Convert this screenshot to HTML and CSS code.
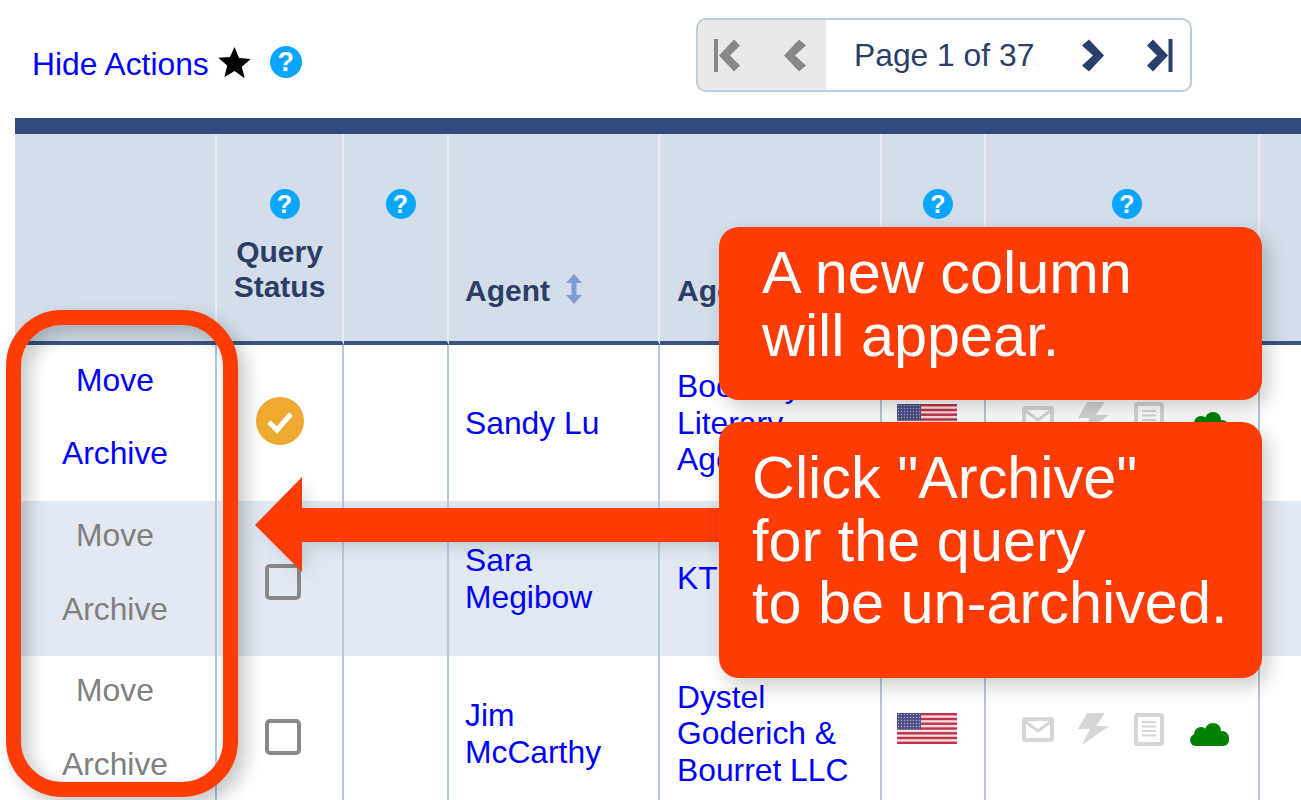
FILE: index.html
```html
<!DOCTYPE html>
<html lang="en">
<head>
<meta charset="utf-8">
<title>Query list</title>
<link rel="stylesheet" href="styles.css">
</head>
<body>
<div class="page">
  <div class="toolbar">
    <div class="hide-group">
      <a class="link" href="#">Hide Actions</a>
      <svg class="star" viewBox="0 0 32 32"><path d="M16 1l4.400 10.600 11.400.9-8.700 7.500 2.700 11.200L16 24.200 6.200 30.200l2.700-11.200L.2 11.500l11.400-.9z"/></svg>
      <span class="help help-lg">?</span>
    </div>
    <div class="pager">
      <div class="pager-off">
        <svg class="pg pg-first" viewBox="0 0 26 33"><rect x="0" y="0" width="4" height="33"/><polygon points="5,16.500 20,.5 26,6.500 16,16.500 26,26.500 20,32.500"/></svg>
        <svg class="pg pg-prev" viewBox="0 0 22 33"><polygon points="0,16.500 15,.5 22,6.500 11,16.500 22,26.500 15,32.500"/></svg>
      </div>
      <span class="pg-label">Page 1 of 37</span>
      <svg class="pg pg-next" viewBox="0 0 22 33"><polygon points="22,16.500 7,.5 0,6.500 11,16.500 0,26.500 7,32.500"/></svg>
      <svg class="pg pg-last" viewBox="0 0 26 33"><rect x="21.500" y="0" width="4" height="33"/><polygon points="21,16.500 6,.5 0,6.500 10,16.500 0,26.500 6,32.500"/></svg>
    </div>
  </div>

  <table class="grid">
    <colgroup>
      <col class="c1"><col class="c2"><col class="c3"><col class="c4"><col class="c5"><col class="c6"><col class="c7"><col class="c8">
    </colgroup>
    <thead>
      <tr>
        <th></th>
        <th class="th-stack"><span class="help">?</span><span class="th-text">Query<br>Status</span></th>
        <th class="th-stack"><span class="help">?</span></th>
        <th class="th-left th-agent"><span class="th-text">Agent</span>
          <svg class="sort" viewBox="0 0 16 30"><path d="M8 0l8 9h-5.500v12H16l-8 9-8-9h5.500V9H0z"/></svg></th>
        <th class="th-left"><span class="th-text">Agency</span></th>
        <th class="th-stack"><span class="help">?</span></th>
        <th class="th-stack"><span class="help">?</span></th>
        <th></th>
      </tr>
    </thead>
    <tbody>
      <tr class="row-a">
        <td class="actions"><a class="link" href="#">Move</a><a class="link" href="#">Archive</a></td>
        <td class="status"><svg class="check" viewBox="0 0 48 48"><circle cx="24" cy="24" r="24"/><path d="M13 25l8 8 14-16"/></svg></td>
        <td></td>
        <td class="name name-agent"><a class="link" href="#">Sandy Lu</a></td>
        <td class="name"><a class="link" href="#">Bookiary Literary Agency</a></td>
        <td class="flagcell"><svg class="flag" viewBox="0 0 60 31"><use href="#us"/></svg></td>
        <td class="iconcell"><div class="icons"><svg class="i-mail" viewBox="0 0 32 25"><use href="#mail"/></svg><svg class="i-bolt" viewBox="0 0 32 32"><use href="#bolt"/></svg><svg class="i-doc" viewBox="0 0 30 33"><use href="#doc"/></svg><svg class="i-cloud" viewBox="0 0 39 23"><use href="#cloud"/></svg></div></td>
        <td></td>
      </tr>
      <tr class="row-b">
        <td class="actions muted"><a href="#">Move</a><a href="#">Archive</a></td>
        <td class="status"><span class="box"></span></td>
        <td></td>
        <td class="name name-agent"><a class="link" href="#">Sara<br>Megibow</a></td>
        <td class="name"><a class="link" href="#">KT Literary</a></td>
        <td class="flagcell"><svg class="flag" viewBox="0 0 60 31"><use href="#us"/></svg></td>
        <td class="iconcell"><div class="icons"><svg class="i-mail" viewBox="0 0 32 25"><use href="#mail"/></svg><svg class="i-bolt" viewBox="0 0 32 32"><use href="#bolt"/></svg><svg class="i-doc" viewBox="0 0 30 33"><use href="#doc"/></svg><svg class="i-cloud" viewBox="0 0 39 23"><use href="#cloud"/></svg></div></td>
        <td></td>
      </tr>
      <tr class="row-c">
        <td class="actions muted"><a href="#">Move</a><a href="#">Archive</a></td>
        <td class="status"><span class="box"></span></td>
        <td></td>
        <td class="name name-agent"><a class="link" href="#">Jim<br>McCarthy</a></td>
        <td class="name"><a class="link" href="#">Dystel<br>Goderich &amp;<br>Bourret LLC</a></td>
        <td class="flagcell"><svg class="flag" viewBox="0 0 60 31"><use href="#us"/></svg></td>
        <td class="iconcell"><div class="icons"><svg class="i-mail" viewBox="0 0 32 25"><use href="#mail"/></svg><svg class="i-bolt" viewBox="0 0 32 32"><use href="#bolt"/></svg><svg class="i-doc" viewBox="0 0 30 33"><use href="#doc"/></svg><svg class="i-cloud" viewBox="0 0 39 23"><use href="#cloud"/></svg></div></td>
        <td></td>
      </tr>
    </tbody>
  </table>

  <div class="ring"></div>
  <svg class="arrow" viewBox="0 0 470 96"><polygon points="0,48 47,0 47,31 470,31 470,65 47,65 47,95"/></svg>
  <div class="callout callout-a">A new column<br>will appear.</div>
  <div class="callout callout-b">Click "Archive"<br>for the query<br>to be un-archived.</div>
</div>

<svg class="defs" width="0" height="0">
  <defs>
    <pattern id="stars" width="3" height="3" patternUnits="userSpaceOnUse">
      <rect width="3" height="3" fill="#4b4f86"/>
      <circle cx="1.500" cy="1.500" r=".7" fill="#a9abc8"/>
    </pattern>
    <g id="us">
      <rect width="60" height="31" fill="#f4dfe2"/>
      <g fill="#c0324a">
        <rect y="0" width="60" height="2.400"/><rect y="4.800" width="60" height="2.400"/><rect y="9.500" width="60" height="2.400"/><rect y="14.300" width="60" height="2.400"/><rect y="19.100" width="60" height="2.400"/><rect y="23.800" width="60" height="2.400"/><rect y="28.600" width="60" height="2.400"/>
      </g>
      <rect width="24" height="16.700" fill="url(#stars)"/>
    </g>
    <g id="mail" fill="none" stroke="#d6d6d6">
      <rect x="2" y="2" width="28" height="21" rx="1.500" stroke-width="4"/>
      <path d="M3 4.500l13 9.500L29 4.500" stroke-width="3"/>
    </g>
    <path id="bolt" fill="#d6d6d6" d="M9 0h18l-9 13h13L4 32l8-16H0z"/>
    <g id="doc">
      <rect x="2" y="2" width="26" height="29" rx="1.500" fill="none" stroke="#d6d6d6" stroke-width="4"/>
      <path d="M8 9h14M8 13.500h14M8 18h14M8 22.500h14" stroke="#d6d6d6" stroke-width="2"/>
    </g>
    <g id="cloud" fill="#008000">
      <rect x="0" y="11" width="39" height="12" rx="6"/>
      <circle cx="11" cy="11" r="7"/>
      <circle cx="23" cy="8" r="8"/>
      <circle cx="32" cy="15" r="7"/>
    </g>
  </defs>
</svg>
</body>
</html>
```
FILE: styles.css
```css
html, body {
  margin: 0;
  height: 800px;
  overflow: hidden;
  background: #fff;
}

.page {
  position: relative;
  width: 1301px;
  height: 800px;
  overflow: hidden;
  font-family: "Liberation Sans", Arial, sans-serif;
  font-size: 31.800px;
  color: #2c3e66;
}

.defs { position: absolute; }

.link { color: #0000ff; text-decoration: none; }

/* toolbar */
.toolbar {
  display: flex;
  align-items: flex-start;
  height: 118px;
  padding: 18px 0 0 32px;
  box-sizing: border-box;
}

.hide-group {
  display: flex;
  align-items: center;
  width: 271px;
  margin-top: 26px;
  line-height: 40px;
}

.star { width: 33px; height: 33px; margin: 0 0 4px 9px; fill: #000; }

.help {
  display: flex;
  align-items: center;
  justify-content: center;
  width: 30px;
  height: 30px;
  border-radius: 50%;
  background: #0aa5ff;
  color: #fff;
  font-size: 25px;
  font-weight: 700;
  line-height: 30px;
}

.help-lg { width: 32px; height: 32px; margin: 0 0 4px 19px; font-size: 27px; }

.pager {
  display: flex;
  align-items: center;
  width: 496px;
  height: 74px;
  margin-left: 393px;
  box-sizing: border-box;
  border: 2px solid #b9cde0;
  border-radius: 10px;
  overflow: hidden;
}

.pager-off {
  display: flex;
  align-items: center;
  align-self: stretch;
  width: 128px;
  padding-left: 16px;
  box-sizing: border-box;
  background: #e9e9e9;
  fill: #888;
}

.pg { height: 33px; flex: none; }
.pg-first { width: 26px; }
.pg-prev { width: 22px; margin-left: 44px; }
.pg-next, .pg-last { fill: #2b3f6e; }
.pg-next { width: 22px; margin-left: 48px; }
.pg-last { width: 26px; margin-left: 43px; }
.pg-label { margin-left: 28px; }

/* table */
.grid {
  table-layout: fixed;
  width: 1486px;
  margin-left: 15px;
  border-collapse: separate;
  border-spacing: 0;
  border-top: 16px solid #334a7f;
}

.c1 { width: 202px; }
.c2 { width: 127px; }
.c3 { width: 105px; }
.c4 { width: 211px; }
.c5 { width: 222px; }
.c6 { width: 104px; }
.c7 { width: 274px; }
.c8 { width: 241px; }

th {
  height: 211px;
  padding: 0;
  box-sizing: border-box;
  background: #d3deea;
  border-right: 2px solid #e5ebf3;
  border-bottom: 4px solid #3c5280;
  font-size: 30px;
  font-weight: 700;
  color: #2c3e66;
}

.th-stack { vertical-align: top; padding-top: 55px; }
.th-stack .help { margin: 0 auto 15px; position: relative; left: 5px; }
.th-text { line-height: 35px; }

.th-left {
  vertical-align: bottom;
  text-align: left;
  padding: 0 0 33px 17px;
  white-space: nowrap;
}

.th-left.th-agent { padding-left: 16px; }

.sort { width: 16px; height: 30px; margin-left: 8px; fill: #7f9bd6; vertical-align: -3px; }

td {
  padding: 0;
  box-sizing: border-box;
  border-right: 2px solid #b4c7dd;
}

.row-a td { height: 156px; }
.row-b td { height: 155px; background: #e3e9f2; }
.row-c td { height: 155px; }

.actions { vertical-align: top; text-align: center; }
.actions a {
  display: block;
  margin-top: 36px;
  line-height: 37px;
  text-decoration: none;
}
.actions a:first-child { margin-top: 17px; }
.muted a { color: #808080; margin-top: 37px; }
.muted a:first-child { margin-top: 16px; }

.status { text-align: center; vertical-align: middle; }
.check { display: block; width: 48px; height: 48px; margin: 0 auto 4px; }
.check circle { fill: #eeaa30; }
.check path { fill: none; stroke: #fff; stroke-width: 5; }

.box {
  display: block;
  width: 36px;
  height: 36px;
  margin: 6px auto 0;
  box-sizing: border-box;
  border: 4px solid #888;
  border-radius: 5px;
  position: relative;
  left: 3px;
}

.name { padding-left: 17px; line-height: 36.600px; vertical-align: middle; }
.name.name-agent { padding-left: 16px; }

.flagcell, .iconcell { vertical-align: top; padding-top: 57px; }
.row-a .flagcell { padding-top: 59px; }
.flag { display: block; width: 60px; height: 31px; margin-left: 15px; }

.icons { display: flex; align-items: flex-start; padding-left: 36px; }
.icons svg { display: block; flex: none; }
.i-mail { width: 32px; height: 25px; margin-top: 4px; }
.i-bolt { width: 32px; height: 32px; margin-left: 24px; }
.i-doc { width: 30px; height: 33px; margin-left: 24px; }
.i-cloud { width: 39px; height: 23px; margin: 10px 0 0 26px; }

/* annotation overlays */
.ring {
  position: absolute;
  left: 6px;
  top: 310px;
  width: 232px;
  height: 487px;
  box-sizing: border-box;
  border: 15px solid #ff3b06;
  border-radius: 56px;
  box-shadow: 8px 8px 18px rgba(0, 0, 0, .22), inset 8px 8px 18px rgba(0, 0, 0, .22);
}

.arrow {
  position: absolute;
  left: 255px;
  top: 477px;
  width: 470px;
  height: 96px;
  fill: #ff3b06;
  filter: drop-shadow(6px 6px 8px rgba(0, 0, 0, .12));
}

.callout {
  position: absolute;
  left: 719px;
  width: 543px;
  box-sizing: border-box;
  background: #ff3b06;
  border-radius: 20px;
  color: #fff;
  font-size: 59.400px;
  line-height: 62.500px;
  white-space: nowrap;
  box-shadow: 6px 8px 20px rgba(0, 0, 0, .2);
}

.callout-a { top: 227px; height: 173px; padding: 15px 0 0 43px; }
.callout-b { top: 422px; height: 256px; padding: 25px 0 0 33px; }
```
